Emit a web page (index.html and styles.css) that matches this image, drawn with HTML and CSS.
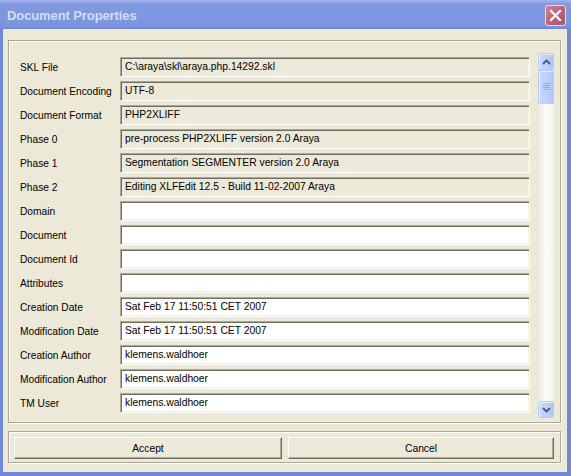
FILE: index.html
```html
<!DOCTYPE html>
<html>
<head>
<meta charset="utf-8">
<link rel="stylesheet" href="styles.css">
</head>
<body>
<div class="window">
  <div class="titlebar">
    <span class="title">Document Properties</span>
    <span class="close">
      <svg width="13" height="13" viewBox="0 0 13 13"><path d="M2 2 L11 11 M11 2 L2 11" stroke="#fff" stroke-width="2.2" stroke-linecap="square" fill="none"/></svg>
    </span>
  </div>
  <div class="client">
    <div class="panel main">
      <div class="form">
        <div class="row"><span class="label">SKL File</span><span class="field ro">C:\araya\skl\araya.php.14292.skl</span></div>
        <div class="row"><span class="label">Document Encoding</span><span class="field ro">UTF-8</span></div>
        <div class="row"><span class="label">Document Format</span><span class="field ro">PHP2XLIFF</span></div>
        <div class="row"><span class="label">Phase 0</span><span class="field ro">pre-process PHP2XLIFF version 2.0 Araya</span></div>
        <div class="row"><span class="label">Phase 1</span><span class="field ro">Segmentation SEGMENTER version 2.0 Araya</span></div>
        <div class="row"><span class="label">Phase 2</span><span class="field ro">Editing XLFEdit 12.5 - Build 11-02-2007 Araya</span></div>
        <div class="row"><span class="label">Domain</span><span class="field"></span></div>
        <div class="row"><span class="label">Document</span><span class="field"></span></div>
        <div class="row"><span class="label">Document Id</span><span class="field"></span></div>
        <div class="row"><span class="label">Attributes</span><span class="field"></span></div>
        <div class="row"><span class="label">Creation Date</span><span class="field">Sat Feb 17 11:50:51 CET 2007</span></div>
        <div class="row"><span class="label">Modification Date</span><span class="field">Sat Feb 17 11:50:51 CET 2007</span></div>
        <div class="row"><span class="label">Creation Author</span><span class="field">klemens.waldhoer</span></div>
        <div class="row"><span class="label">Modification Author</span><span class="field">klemens.waldhoer</span></div>
        <div class="row"><span class="label">TM User</span><span class="field">klemens.waldhoer</span></div>
      </div>
      <div class="scrollbar">
        <div class="sbtn">
          <svg width="9" height="6" viewBox="0 0 9 6"><path d="M1 5 L4.5 1.5 L8 5" stroke="#4D6185" stroke-width="2" fill="none"/></svg>
        </div>
        <div class="thumb">
          <svg width="7" height="8" viewBox="0 0 7 8"><path d="M0 0.5 H7 M0 2.5 H7 M0 4.5 H7 M0 6.5 H7" stroke="#8EA9EC" stroke-width="1" fill="none"/></svg>
        </div>
        <div class="track"></div>
        <div class="sbtn">
          <svg width="9" height="6" viewBox="0 0 9 6"><path d="M1 1 L4.5 4.5 L8 1" stroke="#4D6185" stroke-width="2" fill="none"/></svg>
        </div>
      </div>
    </div>
    <div class="panel buttons">
      <button class="btn">Accept</button>
      <button class="btn">Cancel</button>
    </div>
  </div>
</div>
</body>
</html>
```
FILE: styles.css
```css
html, body {
  margin: 0;
  padding: 0;
  background: #ffffff;
}
.window {
  width: 571px;
  height: 476px;
  box-sizing: border-box;
  background: linear-gradient(to bottom, #a3b5ec 0px, #8199e0 4px, #7b95de 26px, #7088d8 29px);
  padding: 0 4px 4px 3px;
  display: flex;
  flex-direction: column;
  font-family: "Liberation Sans", Arial, sans-serif;
  font-size: 11px;
  color: #000;
  background-color: #6f85d9;
}
.titlebar {
  height: 29px;
  display: flex;
  align-items: center;
  justify-content: space-between;
  padding: 0 1px 0 4px;
  box-sizing: border-box;
}
.title {
  font-weight: bold;
  font-size: 13px;
  color: #d3ddf6;
  letter-spacing: -0.1px;
  margin-top: 2px;
}
.close {
  width: 19px;
  height: 19px;
  border: 1px solid #eadde6;
  border-radius: 3px;
  background: linear-gradient(135deg, #cc8593 0%, #bb6476 50%, #a6566c 100%);
  display: flex;
  align-items: center;
  justify-content: center;
  margin-top: 2px;
}
.client {
  flex: 1;
  background: #ece9d8;
  padding: 11px 6px 0 5px;
  display: flex;
  flex-direction: column;
}
.panel {
  border: 1px solid #aca899;
  box-shadow: inset 1px 1px 0 #fff, 1px 1px 0 #fff;
}
.main {
  height: 383px;
  box-sizing: border-box;
  display: flex;
  align-items: flex-start;
  overflow: hidden;
}
.form {
  flex: 1;
  padding: 16px 8px 0 11px;
  display: flex;
  flex-direction: column;
  gap: 4px;
}
.row {
  display: flex;
  align-items: center;
  height: 20px;
}
.label {
  width: 100px;
  flex: none;
  font-size: 10.2px;
  white-space: nowrap;
}
.field {
  flex: 1;
  height: 20px;
  box-sizing: border-box;
  background: #fff;
  border: 1px solid;
  border-color: #aca899 #fff #fff #aca899;
  box-shadow: inset 1px 1px 0 #716f64, inset -1px -1px 0 #f1efe2;
  padding: 0 4px;
  font-size: 10.3px;
  line-height: 18px;
  white-space: nowrap;
  overflow: hidden;
}
.field.ro {
  background: #ece9d8;
}
.scrollbar {
  width: 16px;
  height: 365px;
  margin: 12px 6px 0 0;
  display: flex;
  flex-direction: column;
  flex: none;
}
.sbtn, .thumb {
  box-sizing: border-box;
  border: 1px solid #b8cbf6;
  border-radius: 2px;
  background: linear-gradient(to right, #c9d9fd, #bccffb 60%, #b2c7f8);
  box-shadow: inset 1px 1px 0 #e8eefe;
  display: flex;
  align-items: center;
  justify-content: center;
}
.sbtn {
  height: 17px;
}
.thumb {
  height: 34px;
}
.track {
  flex: 1;
  background: linear-gradient(to right, #ecebe3, #fbfbf8 50%, #f2f1ea);
}
.buttons {
  margin-top: 8px;
  height: 32px;
  box-sizing: border-box;
  padding: 5px 6px 3px 5px;
  display: flex;
  gap: 6px;
}
.btn {
  flex: 1;
  height: 22px;
  margin: 0;
  padding: 0;
  box-sizing: border-box;
  background: #ece9d8;
  border: 1px solid;
  border-color: #fff #716f64 #716f64 #fff;
  box-shadow: inset -1px -1px 0 #aca899;
  font-family: "Liberation Sans", Arial, sans-serif;
  font-size: 10.3px;
  color: #000;
}
.btn:first-child {
  flex: 0 0 268px;
}
```
